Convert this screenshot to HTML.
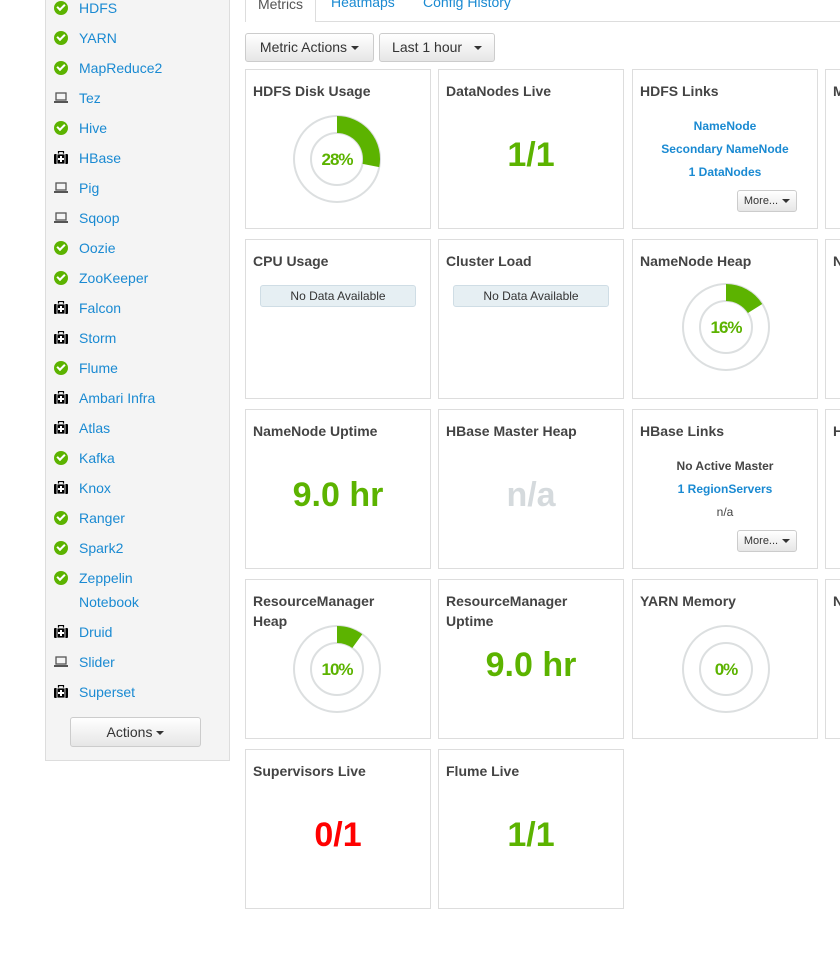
<!DOCTYPE html>
<html><head><meta charset="utf-8"><style>
*{box-sizing:border-box;margin:0;padding:0}
body{width:840px;height:958px;background:#fff;font-family:"Liberation Sans",Arial,sans-serif;position:relative;overflow:hidden;color:#333}
.side{position:absolute;left:45px;top:-5px;width:185px;height:766px;background:#f4f4f4;border:1px solid #ddd}
.it{position:absolute;left:34px;font-size:14px;color:#1a8ad2;white-space:nowrap}
.ic{position:absolute;left:9px;width:14px;height:14px}
.ok{border-radius:50%;background:#5cb300}
.ok:after{content:"";position:absolute;left:3px;top:3px;width:6px;height:3px;border-left:2px solid #fff;border-bottom:2px solid #fff;transform:rotate(-45deg)}
.lap{width:14px;height:12px}
.kit{width:14px;height:13px}
.abtn{position:absolute;left:25px;top:717px;width:131px;height:30px;border:1px solid #ccc;border-radius:3px;background:linear-gradient(#fff,#e6e6e6);font-size:14px;text-align:center;line-height:28px;color:#333}
.caret{display:inline-block;width:0;height:0;border-left:4px solid transparent;border-right:4px solid transparent;border-top:4px solid #333;vertical-align:middle;margin-left:4px}
.tabline{position:absolute;left:245px;top:21px;width:600px;border-top:1px solid #ddd}
.tab{position:absolute;top:-6px;font-size:14px;color:#1a8ad2}
.tact{position:absolute;left:245px;top:-5px;width:71px;height:27px;background:#fff;border:1px solid #ddd;border-bottom:none;color:#555;font-size:14px;text-align:center;padding-top:0px}
.btn{position:absolute;top:33px;height:29px;border:1px solid #ccc;border-radius:3px;background:linear-gradient(#fff,#e6e6e6);font-size:14px;line-height:27px;text-align:center;color:#333}
.card{position:absolute;width:186px;height:160px;border:1px solid #ddd;background:#fff}
.t{position:absolute;left:7px;top:11px;font-size:14px;font-weight:bold;color:#444;line-height:20px}
.big{position:absolute;left:0;right:0;top:66px;text-align:center;font-size:34px;font-weight:bold;color:#5cb300}
.dn{position:absolute;left:46px;top:44px}
.nd{position:absolute;left:14px;right:14px;top:45px;height:22px;background:#e6eff3;border:1px solid #cfdde5;border-radius:3px;font-size:12px;text-align:center;line-height:20px;color:#333}
.lk{position:absolute;left:0;right:0;text-align:center;font-size:12px;font-weight:bold;color:#1a8ad2}
.more{position:absolute;left:104px;top:120px;width:60px;height:22px;border:1px solid #ccc;border-radius:3px;background:linear-gradient(#fff,#e6e6e6);font-size:11px;line-height:20px;text-align:center;color:#333}
</style></head><body>

<div class="side">
<svg width="0" height="0" style="position:absolute"><defs>
<g id="lap"><rect x="2" y="1" width="10" height="7" fill="none" stroke="#555" stroke-width="1.3"/><rect x="0" y="9" width="14" height="2" fill="#555"/></g>
<g id="kit"><rect x="4.5" y="0.5" width="5" height="3" fill="none" stroke="#000" stroke-width="1.2"/><rect x="0" y="3" width="14" height="10" rx="1" fill="#000"/><rect x="3" y="3" width="8" height="10" fill="#000" stroke="#fff" stroke-width="0.8"/><rect x="6" y="5" width="2" height="6" fill="#fff"/><rect x="4" y="7" width="6" height="2" fill="#fff"/></g>
</defs></svg>
</div>

<div style="position:absolute;left:45px;top:0">
<div class="ic ok" style="top:1px;position:absolute"></div><div class="it" style="top:0">HDFS</div>
<div class="ic ok" style="top:31px;position:absolute"></div><div class="it" style="top:30px">YARN</div>
<div class="ic ok" style="top:61px;position:absolute"></div><div class="it" style="top:60px">MapReduce2</div>
<svg class="ic lap" style="top:92px" viewBox="0 0 14 12"><use href="#lap"/></svg><div class="it" style="top:90px">Tez</div>
<div class="ic ok" style="top:121px;position:absolute"></div><div class="it" style="top:120px">Hive</div>
<svg class="ic kit" style="top:151px" viewBox="0 0 14 13"><use href="#kit"/></svg><div class="it" style="top:150px">HBase</div>
<svg class="ic lap" style="top:182px" viewBox="0 0 14 12"><use href="#lap"/></svg><div class="it" style="top:180px">Pig</div>
<svg class="ic lap" style="top:212px" viewBox="0 0 14 12"><use href="#lap"/></svg><div class="it" style="top:210px">Sqoop</div>
<div class="ic ok" style="top:241px;position:absolute"></div><div class="it" style="top:240px">Oozie</div>
<div class="ic ok" style="top:271px;position:absolute"></div><div class="it" style="top:270px">ZooKeeper</div>
<svg class="ic kit" style="top:301px" viewBox="0 0 14 13"><use href="#kit"/></svg><div class="it" style="top:300px">Falcon</div>
<svg class="ic kit" style="top:331px" viewBox="0 0 14 13"><use href="#kit"/></svg><div class="it" style="top:330px">Storm</div>
<div class="ic ok" style="top:361px;position:absolute"></div><div class="it" style="top:360px">Flume</div>
<svg class="ic kit" style="top:391px" viewBox="0 0 14 13"><use href="#kit"/></svg><div class="it" style="top:390px">Ambari Infra</div>
<svg class="ic kit" style="top:421px" viewBox="0 0 14 13"><use href="#kit"/></svg><div class="it" style="top:420px">Atlas</div>
<div class="ic ok" style="top:451px;position:absolute"></div><div class="it" style="top:450px">Kafka</div>
<svg class="ic kit" style="top:481px" viewBox="0 0 14 13"><use href="#kit"/></svg><div class="it" style="top:480px">Knox</div>
<div class="ic ok" style="top:511px;position:absolute"></div><div class="it" style="top:510px">Ranger</div>
<div class="ic ok" style="top:541px;position:absolute"></div><div class="it" style="top:540px">Spark2</div>
<div class="ic ok" style="top:571px;position:absolute"></div><div class="it" style="top:570px">Zeppelin</div>
<div class="it" style="top:594px">Notebook</div>
<svg class="ic kit" style="top:625px" viewBox="0 0 14 13"><use href="#kit"/></svg><div class="it" style="top:624px">Druid</div>
<svg class="ic lap" style="top:656px" viewBox="0 0 14 12"><use href="#lap"/></svg><div class="it" style="top:654px">Slider</div>
<svg class="ic kit" style="top:685px" viewBox="0 0 14 13"><use href="#kit"/></svg><div class="it" style="top:684px">Superset</div>
<div class="abtn">Actions<span class="caret"></span></div>
</div>

<div class="tabline"></div>
<div class="tact">Metrics</div>
<div class="tab" style="left:331px">Heatmaps</div>
<div class="tab" style="left:423px">Config History</div>
<div class="btn" style="left:245px;width:129px">Metric Actions<span class="caret"></span></div>
<div class="btn" style="left:379px;width:116px">Last 1 hour <span class="caret" style="margin-left:8px"></span></div>

<div class="card" style="left:245px;top:69px"><div class="t">HDFS Disk Usage</div>
<svg class="dn" width="90" height="90"><circle cx="45" cy="45" r="43" fill="none" stroke="#dcdfe0" stroke-width="2"/><circle cx="45" cy="45" r="26" fill="none" stroke="#dcdfe0" stroke-width="2"/><path d="M45 10.5 A34.5 34.5 0 0 1 78.9 51.5" fill="none" stroke="#5cb300" stroke-width="17"/><text x="45" y="51" text-anchor="middle" font-family="Liberation Sans" font-weight="bold" font-size="17" fill="#5cb300" letter-spacing="-1">28%</text></svg></div>
<div class="card" style="left:438px;top:69px"><div class="t">DataNodes Live</div><div class="big">1/1</div></div>
<div class="card" style="left:632px;top:69px"><div class="t">HDFS Links</div>
<div class="lk" style="top:49px">NameNode</div><div class="lk" style="top:72px">Secondary NameNode</div><div class="lk" style="top:95px">1 DataNodes</div>
<div class="more">More...<span class="caret"></span></div></div>
<div class="card" style="left:825px;top:69px"><div class="t">M</div></div>

<div class="card" style="left:245px;top:239px"><div class="t">CPU Usage</div><div class="nd">No Data Available</div></div>
<div class="card" style="left:438px;top:239px"><div class="t">Cluster Load</div><div class="nd">No Data Available</div></div>
<div class="card" style="left:632px;top:239px"><div class="t">NameNode Heap</div>
<svg class="dn" width="90" height="90" style="left:48px;top:42px"><circle cx="45" cy="45" r="43" fill="none" stroke="#dcdfe0" stroke-width="2"/><circle cx="45" cy="45" r="26" fill="none" stroke="#dcdfe0" stroke-width="2"/><path d="M45 10.5 A34.5 34.5 0 0 1 74.1 26.5" fill="none" stroke="#5cb300" stroke-width="17"/><text x="45" y="51" text-anchor="middle" font-family="Liberation Sans" font-weight="bold" font-size="17" fill="#5cb300" letter-spacing="-1">16%</text></svg></div>
<div class="card" style="left:825px;top:239px"><div class="t">N</div></div>

<div class="card" style="left:245px;top:409px"><div class="t">NameNode Uptime</div><div class="big">9.0 hr</div></div>
<div class="card" style="left:438px;top:409px"><div class="t">HBase Master Heap</div><div class="big" style="color:#d5dadd">n/a</div></div>
<div class="card" style="left:632px;top:409px"><div class="t">HBase Links</div>
<div class="lk" style="top:49px;color:#444">No Active Master</div><div class="lk" style="top:72px">1 RegionServers</div><div class="lk" style="top:95px;color:#444;font-weight:normal">n/a</div>
<div class="more">More...<span class="caret"></span></div></div>
<div class="card" style="left:825px;top:409px"><div class="t">H</div></div>

<div class="card" style="left:245px;top:579px"><div class="t">ResourceManager<br>Heap</div>
<svg class="dn" width="90" height="90"><circle cx="45" cy="45" r="43" fill="none" stroke="#dcdfe0" stroke-width="2"/><circle cx="45" cy="45" r="26" fill="none" stroke="#dcdfe0" stroke-width="2"/><path d="M45 10.5 A34.5 34.5 0 0 1 65.3 17.1" fill="none" stroke="#5cb300" stroke-width="17"/><text x="45" y="51" text-anchor="middle" font-family="Liberation Sans" font-weight="bold" font-size="17" fill="#5cb300" letter-spacing="-1">10%</text></svg></div>
<div class="card" style="left:438px;top:579px"><div class="t">ResourceManager<br>Uptime</div><div class="big">9.0 hr</div></div>
<div class="card" style="left:632px;top:579px"><div class="t">YARN Memory</div>
<svg class="dn" width="90" height="90" style="left:48px"><circle cx="45" cy="45" r="43" fill="none" stroke="#dcdfe0" stroke-width="2"/><circle cx="45" cy="45" r="26" fill="none" stroke="#dcdfe0" stroke-width="2"/><text x="45" y="51" text-anchor="middle" font-family="Liberation Sans" font-weight="bold" font-size="17" fill="#5cb300" letter-spacing="-1">0%</text></svg></div>
<div class="card" style="left:825px;top:579px"><div class="t">N</div></div>

<div class="card" style="left:245px;top:749px"><div class="t">Supervisors Live</div><div class="big" style="color:#f00">0/1</div></div>
<div class="card" style="left:438px;top:749px"><div class="t">Flume Live</div><div class="big">1/1</div></div>
</body></html>
